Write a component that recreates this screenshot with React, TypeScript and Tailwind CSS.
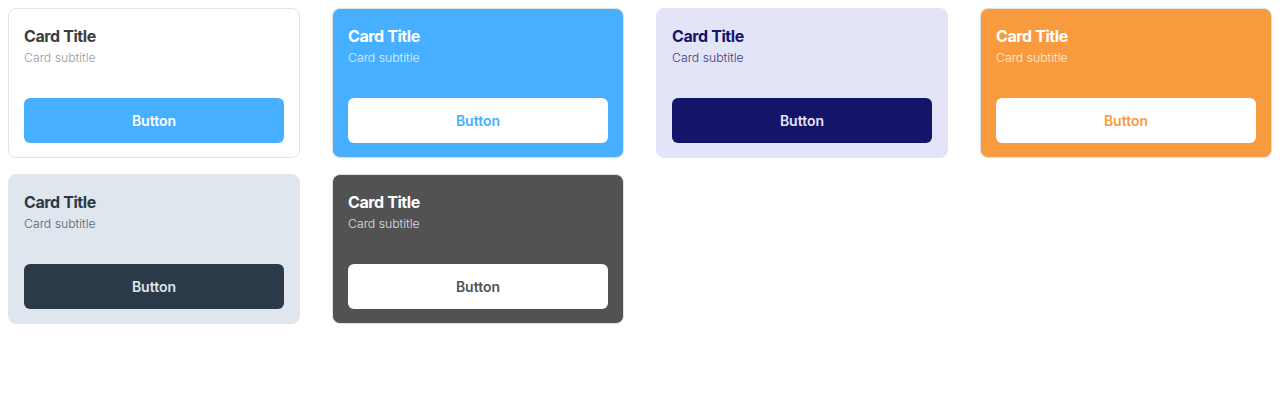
const cards = [
  {
    card: 'bg-white border-[#e3e3e3]',
    title: 'text-[#3d3d3d]',
    subtitle: 'text-[#9a9a9a]',
    button: 'bg-[#47afff] text-white',
  },
  {
    card: 'bg-[#47afff] border-[#e0e0e0]',
    title: 'text-white',
    subtitle: 'text-white/80',
    button: 'bg-white text-[#47afff]',
  },
  {
    card: 'bg-[#e4e4f8] border-[#e4e4f8]',
    title: 'text-[#13146a]',
    subtitle: 'text-[#3a3b80]',
    button: 'bg-[#13146a] text-[#e4e4f8]',
  },
  {
    card: 'bg-[#f89b3f] border-[#e0e0e0]',
    title: 'text-white',
    subtitle: 'text-white/80',
    button: 'bg-white text-[#f89b3f]',
  },
  {
    card: 'bg-[#e0e6ed] border-[#e0e6ed]',
    title: 'text-[#2a3a48]',
    subtitle: 'text-[#56636f]',
    button: 'bg-[#2a3a48] text-[#e0e6ed]',
  },
  {
    card: 'bg-[#525252] border-[#e0e0e0]',
    title: 'text-white',
    subtitle: 'text-white/80',
    button: 'bg-white text-[#525252]',
  },
]

function Card({ c }: { c: (typeof cards)[number] }) {
  return (
    <div className={`flex h-[150px] flex-col rounded-lg border px-[15px] pt-[15px] pb-[14px] ${c.card}`}>
      <h2 className={`text-base leading-6 font-bold tracking-tight ${c.title}`}>Card Title</h2>
      <p className={`text-[12.25px] leading-5 font-light ${c.subtitle}`}>Card subtitle</p>
      <button className={`mt-auto h-[45px] w-full rounded-md text-sm font-semibold ${c.button}`}>
        Button
      </button>
    </div>
  )
}

export default function App() {
  return (
    <div
      className="min-h-[400px] bg-white p-2"
      style={{ fontFamily: 'Inter, sans-serif' }}
    >
      <div className="grid grid-cols-4 gap-x-8 gap-y-4">
        {cards.map((c, i) => (
          <Card key={i} c={c} />
        ))}
      </div>
    </div>
  )
}
